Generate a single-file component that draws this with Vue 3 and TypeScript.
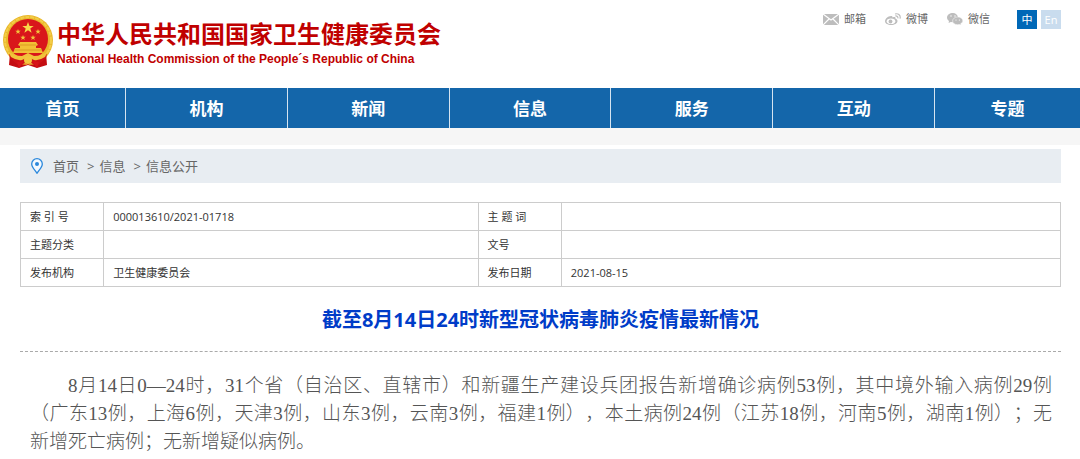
<script setup lang="ts">
interface NavItem {
  label: string
  size: 'first' | 'middle' | 'last'
}

const navItems: NavItem[] = [
  { label: '首页', size: 'first' },
  { label: '机构', size: 'middle' },
  { label: '新闻', size: 'middle' },
  { label: '信息', size: 'middle' },
  { label: '服务', size: 'middle' },
  { label: '互动', size: 'middle' },
  { label: '专题', size: 'last' },
]

const rows: string[][] = [
  ['索 引 号', '000013610/2021-01718', '主 题 词', ''],
  ['主题分类', '', '文号', ''],
  ['发布机构', '卫生健康委员会', '发布日期', '2021-08-15'],
]

const lines: string[] = [
  '8月14日0—24时，31个省（自治区、直辖市）和新疆生产建设兵团报告新增确诊病例53例，其中境外输入病例29例',
  '（广东13例，上海6例，天津3例，山东3例，云南3例，福建1例），本土病例24例（江苏18例，河南5例，湖南1例）；无',
  '新增死亡病例；无新增疑似病例。',
]
</script>

<template>
  <div class="page">
    <header class="header">
      <a class="brand" href="#">
        <svg class="emblem" viewBox="0 0 52 56" aria-hidden="true">
          <path d="M8 39 L7 51 L17 54 L26 51 L35 54 L45 51 L44 39Z" fill="#c40d12" />
          <circle cx="26" cy="26" r="25" fill="#e9b72b" />
          <circle cx="26" cy="26" r="23" fill="none" stroke="#f3cd48" stroke-width="2" stroke-dasharray="4 1" />
          <circle cx="26" cy="25" r="20" fill="#d9161b" />
          <path d="M26 8l1.500 4h4.200l-3.400 2.600 1.300 4.100L26 16.200l-3.600 2.500 1.300-4.100-3.400-2.600h4.200z" fill="#f8d84a" />
          <g fill="#f3c53c">
            <path d="M16 15l.7 1.800h2l-1.600 1.200.6 2-1.700-1.200-1.700 1.200.6-2-1.600-1.200h2z" />
            <path d="M36 15l.7 1.800h2l-1.600 1.200.6 2-1.700-1.200-1.700 1.200.6-2-1.600-1.200h2z" />
            <path d="M21 21l.7 1.800h2l-1.600 1.200.6 2-1.700-1.200-1.700 1.200.6-2-1.600-1.200h2z" />
            <path d="M31 21l.7 1.800h2l-1.600 1.200.6 2-1.700-1.200-1.700 1.200.6-2-1.600-1.200h2z" />
          </g>
          <path d="M18 28h16l2 3-2 1v2h5l2 5H11l2-5h5v-2l-2-1z" fill="#f2bf35" />
          <path d="M12 36h28M18 31h16" stroke="#dd9a22" stroke-width="1" />
          <path d="M7 40q7 2 13 5l6-3 6 3q6-3 13-5l-1 4-9 8-6-3-3 2-3-2-6 3-9-8z" fill="#cf1015" />
          <path d="M6 37q6 5 14 5l6-3 6 3q8 0 14-5l-3 6q-6 4-11 3l-6-3-6 3q-5 1-11-3z" fill="#f1c33b" />
          <circle cx="26" cy="46" r="4" fill="#f4c63e" />
          <path d="M15 48l7-1-5 7zM37 48l-7-1 5 7z" fill="#d71419" />
        </svg>
        <span class="brand-text">
          <span class="brand-cn">中华人民共和国国家卫生健康委员会</span>
          <span class="brand-en">National Health Commission of the People´s Republic of China</span>
        </span>
      </a>
      <div class="tools">
        <a class="tool" href="#">
          <svg class="icon" viewBox="0 0 16 12" aria-hidden="true">
            <rect y="1" width="16" height="11" fill="#bdbdbd" />
            <path d="M0 1l8 6 8-6M0 12l6-6M16 12l-6-6" fill="none" stroke="#fff" stroke-width="1.200" />
          </svg>
          <span>邮箱</span>
        </a>
        <a class="tool" href="#">
          <svg class="icon" viewBox="0 0 16 12" aria-hidden="true">
            <path d="M6 3C3 3 0 6 0 8.300 0 10.500 2.800 12 6.200 12s6.300-1.600 6.300-4c0-1.400-1-2-2-2.300.3-1.600-.8-2-3-1.200C7.900 3.500 7 3 6 3z" fill="#bdbdbd" />
            <ellipse cx="6" cy="8.300" rx="4.300" ry="2.800" fill="#fff" />
            <circle cx="5.500" cy="8.500" r="1.900" fill="#bdbdbd" />
            <path d="M10 1c3.300-.9 6 1.200 5 4.700M10.300 3c1.600-.3 2.900.7 2.500 2.300" fill="none" stroke="#bdbdbd" stroke-width="1.200" />
          </svg>
          <span>微博</span>
        </a>
        <a class="tool" href="#">
          <svg class="icon" viewBox="0 0 16 12" aria-hidden="true">
            <path d="M6 0C2.600 0 0 2 0 4.600 0 6 .8 7.200 2 8l-.4 2 2.200-1.100L6 9.200 11 4C10.500 1.700 8.500 0 6 0z" fill="#bdbdbd" />
            <path d="M10.700 4C7.800 4 5.600 5.700 5.600 7.900s2.200 3.800 5.100 3.800l1.700-.2L14.200 12l-.4-1.500C15 9.900 15.800 9 15.800 7.900 15.800 5.700 13.600 4 10.700 4z" fill="#bdbdbd" stroke="#fff" stroke-width=".5" />
            <g fill="#fff"><circle cx="4" cy="3" r=".7" /><circle cx="8" cy="3" r=".7" /><circle cx="9" cy="7" r=".6" /><circle cx="12.400" cy="7" r=".6" /></g>
          </svg>
          <span>微信</span>
        </a>
        <div class="langs">
          <button type="button" class="lang active">中</button>
          <button type="button" class="lang">En</button>
        </div>
      </div>
    </header>

    <nav class="nav">
      <a v-for="item in navItems" :key="item.label" href="#" :class="['nav-item', item.size]">{{ item.label }}</a>
    </nav>
    <div class="band"></div>

    <main class="content">
      <nav class="crumbs">
        <svg class="pin" viewBox="0 0 12 16" aria-hidden="true">
          <path d="M6 15.300C4.500 12.500.7 9.500.7 6a5.300 5.300 0 0 1 10.600 0C11.300 9.500 7.500 12.500 6 15.300z" fill="#f4f9ff" stroke="#2b88dc" stroke-width="1.300" />
          <circle cx="6" cy="6" r="2" fill="#2b88dc" />
        </svg>
        <a href="#">首页</a>
        <span class="sep">&gt;</span>
        <a href="#">信息</a>
        <span class="sep">&gt;</span>
        <a href="#">信息公开</a>
      </nav>

      <table class="info">
        <colgroup>
          <col class="col-label" />
          <col class="col-value" />
          <col class="col-label" />
          <col class="col-rest" />
        </colgroup>
        <tbody>
          <tr v-for="row in rows" :key="row[0]">
            <th scope="row">{{ row[0] }}</th>
            <td>{{ row[1] }}</td>
            <th scope="row">{{ row[2] }}</th>
            <td>{{ row[3] }}</td>
          </tr>
        </tbody>
      </table>

      <h1 class="title">截至8月14日24时新型冠状病毒肺炎疫情最新情况</h1>

      <p class="article">
        <span v-for="line in lines" :key="line" class="line">{{ line }}</span>
      </p>
    </main>
  </div>
</template>

<style>
body {
  margin: 0;
  background: #fff;
}
</style>

<style scoped>
.page {
  font-family: "Open Sans", "Noto Sans CJK SC", sans-serif;
  color: #333;
}

a {
  color: inherit;
  text-decoration: none;
}

.header {
  display: flex;
  justify-content: space-between;
  align-items: flex-start;
  height: 88px;
  padding: 0 19px 0 2px;
  box-sizing: border-box;
}

.brand {
  display: flex;
  align-items: flex-start;
  gap: 3px;
  padding-top: 14px;
  color: #c00000;
}

.emblem {
  width: 52px;
  height: 56px;
}

.brand-text {
  display: flex;
  flex-direction: column;
  padding-top: 4px;
  white-space: nowrap;
}

.brand-cn {
  font-size: 24px;
  line-height: 32px;
  font-weight: 700;
}

.brand-en {
  font-family: "Liberation Sans", Arial, sans-serif;
  font-size: 12px;
  line-height: 18px;
  font-weight: 700;
}

.tools {
  display: flex;
  align-items: center;
  gap: 19px;
  padding-top: 9px;
  font-size: 11px;
  line-height: 20px;
  color: #666;
}

.tool {
  display: flex;
  align-items: center;
  gap: 5px;
}

.icon {
  width: 16px;
  height: 12px;
}

.langs {
  display: flex;
  gap: 4px;
  margin-left: 8px;
}

.lang {
  width: 20px;
  height: 19px;
  padding: 0;
  border: 0;
  background: #c9dcee;
  color: #fff;
  font-family: inherit;
  font-size: 11px;
  line-height: 19px;
}

.lang.active {
  background: #0068b7;
}

.nav {
  display: flex;
  height: 40px;
  background: #1466aa;
}

.nav-item {
  flex: 162 1 0;
  box-sizing: border-box;
  border-right: 1px solid #d5e4f1;
  color: #fff;
  font-size: 17px;
  font-weight: 700;
  line-height: 42px;
  text-align: center;
}

.nav-item.first {
  flex-grow: 126;
}

.nav-item.last {
  flex-grow: 146;
  border-right: 0;
}

.band {
  height: 17px;
  background: #f6f6f6;
}

.content {
  padding: 4px 19px 0 20px;
}

.crumbs {
  display: flex;
  align-items: center;
  height: 34px;
  padding-left: 11px;
  background: #e8edf2;
  color: #666;
  font-size: 13px;
  line-height: 16px;
}

.pin {
  width: 12px;
  height: 16px;
  margin-right: 10px;
}

.sep {
  margin: 0 5px 0 8px;
}

.info {
  width: 100%;
  margin-top: 19px;
  border-collapse: collapse;
  table-layout: fixed;
  font-size: 11px;
  line-height: 27px;
}

.col-label {
  width: 8%;
}

.col-value {
  width: 36%;
}

.info th,
.info td {
  height: 27px;
  padding: 0 9px;
  border: 1px solid #ccc;
  font-weight: 400;
  text-align: left;
  white-space: nowrap;
}

.title {
  margin: 0;
  padding: 17px 0 15px;
  border-bottom: 1px dashed #aaa;
  color: #003cc8;
  font-size: 20px;
  line-height: 32px;
  font-weight: 700;
  text-align: center;
}

.article {
  margin: 20px 9px 0 10px;
  color: #555;
  font-family: "Liberation Serif", "Noto Sans CJK SC", serif;
  font-size: 19px;
  line-height: 28px;
  font-weight: 300;
  text-spacing-trim: space-all;
}

.line {
  display: block;
  text-align: justify;
  text-align-last: justify;
}

.line:first-child {
  text-indent: 2em;
}

.line:last-child {
  text-align-last: left;
}
</style>
